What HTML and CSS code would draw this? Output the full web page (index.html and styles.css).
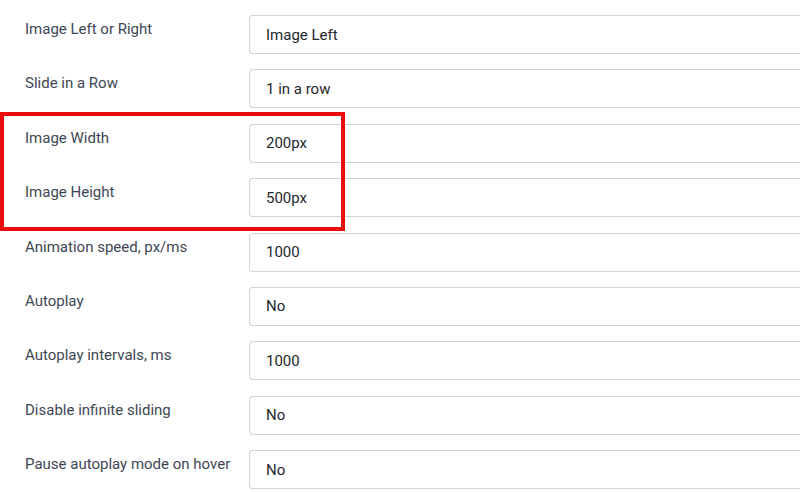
FILE: index.html
```html
<!DOCTYPE html>
<html>
<head>
<meta charset="utf-8">
<link rel="stylesheet" href="styles.css">
</head>
<body>
<div class="form">
  <div class="row"><div class="label">Image Left or Right</div><div class="field">Image Left</div></div>
  <div class="row"><div class="label">Slide in a Row</div><div class="field">1 in a row</div></div>
  <div class="row"><div class="label">Image Width</div><div class="field">200px</div></div>
  <div class="row"><div class="label">Image Height</div><div class="field">500px</div></div>
  <div class="row"><div class="label">Animation speed, px/ms</div><div class="field">1000</div></div>
  <div class="row"><div class="label">Autoplay</div><div class="field">No</div></div>
  <div class="row"><div class="label">Autoplay intervals, ms</div><div class="field">1000</div></div>
  <div class="row"><div class="label">Disable infinite sliding</div><div class="field">No</div></div>
  <div class="row"><div class="label">Pause autoplay mode on hover</div><div class="field">No</div></div>
  <div class="highlight"></div>
</div>
</body>
</html>
```

FILE: styles.css
```css
html, body {
  margin: 0;
  padding: 0;
  background: #fff;
  overflow: hidden;
}
body {
  font-family: Roboto, "Liberation Sans", sans-serif;
  font-size: 15px;
  line-height: 20px;
}
.form {
  position: relative;
  width: 800px;
  height: 492px;
  padding: 15px 0 0 25px;
  box-sizing: border-box;
  display: flex;
  flex-direction: column;
  gap: 15.375px;
}
.row {
  display: flex;
  align-items: flex-start;
}
.label {
  width: 224px;
  flex: none;
  padding-top: 4px;
  color: #3e4654;
}
.field {
  flex: 1;
  height: 39px;
  box-sizing: border-box;
  border: 1px solid #cdd3da;
  border-right: none;
  border-radius: 4px 0 0 4px;
  padding: 0 16px;
  display: flex;
  align-items: center;
  color: #23272d;
  background: #fff;
}
.highlight {
  position: absolute;
  left: 0;
  top: 112px;
  width: 345px;
  height: 119px;
  box-sizing: border-box;
  border: 4px solid #ec0c0c;
}
```
